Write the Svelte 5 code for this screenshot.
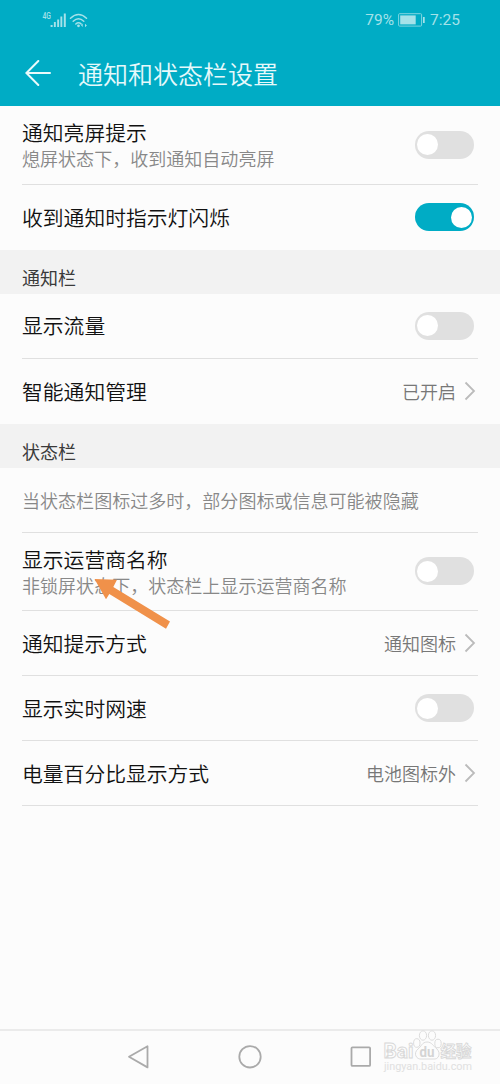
<script>
  let groups = $state([
    {
      title: '',
      rows: [
        { label: '通知亮屏提示', sub: '熄屏状态下，收到通知自动亮屏', toggle: true, on: false },
        { label: '收到通知时指示灯闪烁', toggle: true, on: true }
      ]
    },
    {
      title: '通知栏',
      rows: [
        { label: '显示流量', toggle: true, on: false },
        { label: '智能通知管理', value: '已开启' }
      ]
    },
    {
      title: '状态栏',
      note: '当状态栏图标过多时，部分图标或信息可能被隐藏',
      rows: [
        { label: '显示运营商名称', sub: '非锁屏状态下，状态栏上显示运营商名称', toggle: true, on: false },
        { label: '通知提示方式', value: '通知图标' },
        { label: '显示实时网速', toggle: true, on: false },
        { label: '电量百分比显示方式', value: '电池图标外', last: true }
      ]
    }
  ]);
</script>

<div class="phone">
  <header>
    <div class="status">
      <svg class="signal" width="48" height="20" viewBox="0 0 48 20">
        <text x="0.5" y="8.5" font-size="8.5" font-weight="500" textLength="8.5" lengthAdjust="spacingAndGlyphs">4G</text>
        <path d="M8.6 15h2v2h-2zM11.9 12h1.9v5h-1.9zM15.2 9.5h1.9v7.5h-1.9zM18.4 6.5h1.9v10.5h-1.9zM21.8 3.5h2v13.5h-2z" />
        <g class="wifi">
          <path d="M28.5 8.2Q36.5 0.8 44.5 8.2" />
          <path d="M31.2 11.2Q36.5 6.4 41.8 11.2" />
          <path d="M33.8 14Q36.5 11.6 39.2 14" />
        </g>
        <circle cx="36.5" cy="15.8" r="1.4" />
        <path d="M40.7 13.6v3.4l-1.7-1.7zM43 13.8v3.4l1.9-1.7z" />
      </svg>
      <div class="right">
        <span>79%</span>
        <svg width="28" height="14" viewBox="0 0 28 14">
          <rect x="0.6" y="0.7" width="23" height="12.4" rx="1" fill="none" stroke="#7fd6e0" stroke-width="1" />
          <rect x="2.2" y="2.4" width="15.5" height="9" />
          <rect x="25" y="4" width="1.7" height="6" />
        </svg>
        <span>7:25</span>
      </div>
    </div>
    <div class="title-bar">
      <svg width="26" height="26" viewBox="0 0 26 26">
        <path d="M13.3 1L1.4 13l11.9 12M1.4 13H25" />
      </svg>
      <h1>通知和状态栏设置</h1>
    </div>
  </header>

  <main>
    {#each groups as group}
      {#if group.title}
        <h2>{group.title}</h2>
      {/if}
      {#if group.note}
        <p class="note line">{group.note}</p>
      {/if}
      {#each group.rows as row, i}
        <div class="row" class:tall={row.sub} class:line={i < group.rows.length - 1 || row.last}>
          <div class="text">
            <div class="label">{row.label}</div>
            {#if row.sub}
              <div class="sub">{row.sub}</div>
            {/if}
          </div>
          {#if row.toggle}
            <button class="switch" class:on={row.on} aria-label={row.label} onclick={() => (row.on = !row.on)}>
              <span class="knob"></span>
            </button>
          {:else}
            <div class="value">
              {row.value}
              <svg width="12" height="20" viewBox="0 0 12 20"><path d="M1.5 1.5L10 10l-8.5 8.5" /></svg>
            </div>
          {/if}
        </div>
      {/each}
    {/each}
  </main>

  <nav>
    <svg width="24" height="26" viewBox="0 0 24 26"><path d="M20.5 2.2v21.2L2 12.8z" /></svg>
    <svg width="24" height="26" viewBox="0 0 24 26"><circle cx="12" cy="12.8" r="10.7" /></svg>
    <svg width="24" height="26" viewBox="0 0 24 26"><rect x="2.5" y="3.3" width="18.6" height="18.6" rx="1" /></svg>
  </nav>

  <svg class="pointer" width="80" height="60" viewBox="0 0 80 60">
    <path d="M4.500 9L27 9.800 23.300 17 80 51.600 76 58.700 19.300 24 16 29.300z" />
  </svg>

  <svg class="mark" width="96" height="48" viewBox="0 0 96 48">
    <g class="outline">
      <text x="3.5" y="30.5" font-size="20" textLength="30" lengthAdjust="spacingAndGlyphs">Bai</text>
      <path d="M47 15c-5 0-6 5-9 7-5 4-2 11 4 10h11c6 1 8-6 4-10-4-3-5-7-10-7z" />
      <ellipse cx="43" cy="8.5" rx="3.6" ry="4.7" />
      <ellipse cx="52" cy="8.5" rx="3.6" ry="4.7" />
      <ellipse cx="36.8" cy="16" rx="3.2" ry="4.3" />
      <ellipse cx="58" cy="16.5" rx="3.2" ry="4.3" />
      <text x="60.5" y="29.5" font-size="16" textLength="31" lengthAdjust="spacingAndGlyphs">经验</text>
    </g>
    <text class="du" x="39.5" y="29.5" font-size="14" textLength="15" lengthAdjust="spacingAndGlyphs">du</text>
    <text class="url" x="4" y="42.5" font-size="10" textLength="88" lengthAdjust="spacingAndGlyphs">jingyan.baidu.com</text>
  </svg>
</div>

<style>
  :global(body) {
    background: #fcfcfc;
  }

  .phone {
    position: relative;
    display: flex;
    flex-direction: column;
    width: 500px;
    height: 1084px;
    overflow: hidden;
    background: #fcfcfc;
    font-family: Roboto, 'Noto Sans CJK SC', sans-serif;
    color: #111;
  }

  header {
    height: 106px;
    box-sizing: border-box;
    background: #00acc5;
  }

  .status {
    display: flex;
    justify-content: space-between;
    align-items: center;
    height: 40px;
    padding: 0 40px 0 42px;
  }

  .signal {
    fill: #a5e2e9;
  }

  .wifi {
    fill: none;
    stroke: #a5e2e9;
    stroke-width: 1.5;
    stroke-linecap: round;
  }

  .right {
    display: flex;
    align-items: center;
    gap: 4px;
    font-size: 15.5px;
    color: #a5e2e9;
    fill: #a5e2e9;
  }

  .title-bar {
    display: flex;
    align-items: center;
    gap: 27px;
    height: 66px;
    padding-left: 25px;
  }

  .title-bar svg {
    fill: none;
    stroke: #eafafb;
    stroke-width: 2;
    stroke-linecap: round;
  }

  h1 {
    margin: 0;
    padding-top: 5px;
    font-size: 25px;
    line-height: 36px;
    font-weight: 350;
    color: #e6f9fb;
  }

  main {
    flex: 1;
  }

  h2 {
    margin: 0;
    height: 44px;
    padding: 7px 22px 0;
    box-sizing: border-box;
    background: #f2f2f2;
    font-size: 18px;
    line-height: 44px;
    font-weight: 400;
    color: #3a3a3a;
  }

  .note {
    margin: 0 22px;
    height: 65px;
    box-sizing: border-box;
    font-size: 18.05px;
    line-height: 67px;
    font-weight: 350;
    color: #888;
    white-space: nowrap;
  }

  .row {
    display: flex;
    justify-content: space-between;
    align-items: center;
    height: 65px;
    margin: 0 22px;
    padding-right: 4px;
    box-sizing: border-box;
  }

  .row.tall {
    height: 78.5px;
  }

  .line {
    border-bottom: 1px solid #e0e0e0;
  }

  .text {
    padding-top: 3px;
  }

  .label {
    font-size: 20.8px;
    line-height: 28px;
    font-weight: 350;
  }

  .sub {
    font-size: 18.05px;
    line-height: 24px;
    font-weight: 350;
    color: #888;
    white-space: nowrap;
  }

  .switch {
    width: 59px;
    height: 28px;
    padding: 2px;
    border: 0;
    border-radius: 14px;
    background: #e0e0e0;
    display: flex;
    align-items: center;
  }

  .switch.on {
    justify-content: flex-end;
    background: #00acc5;
  }

  .knob {
    width: 21px;
    height: 21px;
    border-radius: 50%;
    background: #fff;
  }

  .value {
    display: flex;
    align-items: center;
    gap: 8px;
    margin-right: -2px;
    font-size: 18px;
    font-weight: 350;
    color: #777;
  }

  .value svg {
    fill: none;
    stroke: #bbb;
    stroke-width: 1.8;
  }

  nav {
    display: flex;
    justify-content: center;
    gap: 87px;
    height: 55px;
    padding-top: 13px;
    box-sizing: border-box;
    border-top: 2px solid #ebebeb;
  }

  nav svg {
    fill: none;
    stroke: #aaa;
    stroke-width: 1.8;
    stroke-linejoin: round;
  }

  .pointer {
    position: absolute;
    left: 90px;
    top: 570px;
    fill: #f0914a;
  }

  .mark {
    position: absolute;
    left: 380px;
    top: 1027px;
    font-weight: 700;
  }

  .outline {
    fill: #fcfcfc;
    stroke: #d8d8d8;
    stroke-width: 0.9;
  }

  .du {
    fill: #d4d4d4;
  }

  .url {
    fill: #e0e0e0;
    font-weight: 400;
  }
</style>
